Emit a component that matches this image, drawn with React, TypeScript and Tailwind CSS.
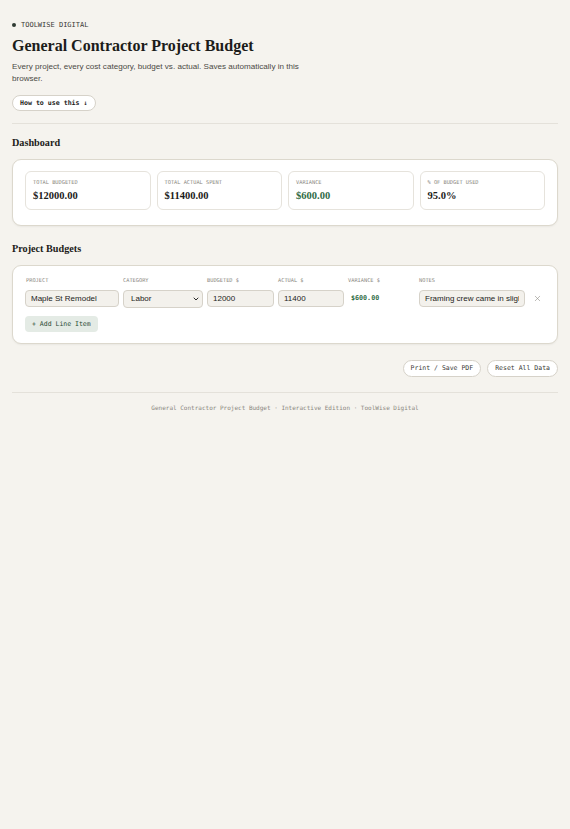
import { X, ChevronDown } from "lucide-react";

const mono = "font-['DejaVu_Sans_Mono',monospace]";
const serif = "font-['Liberation_Serif',serif]";
const sans = "font-['Liberation_Sans',sans-serif]";

const cols = "grid grid-cols-[94px_80px_67px_66px_67px_106px_1fr] gap-x-[4px]";

function Stat({ label, value, green }: { label: string; value: string; green?: boolean }) {
  return (
    <div className="rounded-md border border-[#e6e3dc] bg-white px-[7px] pt-[7px] pb-[6px]">
      <div className={`${mono} text-[5.3px] leading-[7px] uppercase text-[#8a8780]`}>{label}</div>
      <div className={`${serif} mt-[3px] text-[10.5px] font-bold leading-[14px] ${green ? "text-[#2f6b45]" : "text-[#1c1c1a]"}`}>
        {value}
      </div>
    </div>
  );
}

const inputCls = `${sans} block h-[17px] w-full rounded-[4px] border border-[#d6d2c9] bg-[#f3f1ec] px-[5px] text-[8px] leading-[15px] text-[#1c1c1a] outline-none`;

export default function App() {
  return (
    <div className="min-h-[829px] bg-[#f5f3ee] px-[12px] pt-[21px] pb-6 text-[#1c1c1a]">
      <div className={`${mono} flex h-[8px] items-center gap-[5px] text-[7px] leading-[8px] text-[#3a3a36]`}>
        <span className="h-[4px] w-[4px] rounded-full bg-[#2f3a32]" />
        TOOLWISE DIGITAL
      </div>
      <h1 className={`${serif} mt-[7px] text-[16px] font-bold leading-[20px]`}>General Contractor Project Budget</h1>
      <p className={`${sans} mt-[5px] max-w-[300px] text-[8.1px] leading-[12px] text-[#4b4a45]`}>
        Every project, every cost category, budget vs. actual. Saves automatically in this browser.
      </p>
      <button className={`${mono} mt-[10px] h-[16px] rounded-full border border-[#d6d2c9] bg-white px-[7px] text-[6.6px] font-bold leading-[14px] text-[#1c1c1a]`}>
        How to use this ↓
      </button>

      <div className="mt-[12px] h-px bg-[#e4e1da]" />

      <h2 className={`${serif} mt-[13px] text-[10.2px] font-bold leading-[12px]`}>Dashboard</h2>
      <div className="mt-[10px] rounded-[9px] border border-[#dcd8cd] bg-white px-[12px] pt-[11px] pb-[15px] shadow-[0_1px_2px_rgba(0,0,0,0.05)]">
        <div className="grid grid-cols-4 gap-[6px]">
          <Stat label="Total Budgeted" value="$12000.00" />
          <Stat label="Total Actual Spent" value="$11400.00" />
          <Stat label="Variance" value="$600.00" green />
          <Stat label="% of Budget Used" value="95.0%" />
        </div>
      </div>

      <h2 className={`${serif} mt-[17px] text-[10.2px] font-bold leading-[12px]`}>Project Budgets</h2>
      <div className="mt-[10px] rounded-[9px] border border-[#dcd8cd] bg-white px-[12px] pt-[11px] pb-[11px] shadow-[0_1px_2px_rgba(0,0,0,0.05)]">
        <div className={`${mono} ${cols} text-[5.3px] leading-[7px] uppercase text-[#8a8780]`}>
          <div className="pl-[1px]">Project</div>
          <div>Category</div>
          <div>Budgeted $</div>
          <div>Actual $</div>
          <div>Variance $</div>
          <div>Notes</div>
          <div />
        </div>
        <div className={`mt-[5.5px] ${cols} items-center`}>
          <input className={inputCls} defaultValue="Maple St Remodel" />
          <div className="relative">
            <select className={`${inputCls} h-[18px] appearance-none pl-[7px]`} defaultValue="Labor">
              <option>Labor</option>
              <option>Materials</option>
            </select>
            <ChevronDown
              className="pointer-events-none absolute right-[3px] top-[5px] h-[8px] w-[8px] text-[#2a2a28]"
              strokeWidth={3}
            />
          </div>
          <input className={inputCls} defaultValue="12000" />
          <input className={inputCls} defaultValue="11400" />
          <div className={`${mono} pl-[3px] text-[6.7px] font-bold text-[#2f6b45]`}>$600.00</div>
          <input className={inputCls} defaultValue="Framing crew came in slightly under budget" />
          <div className="flex justify-center">
            <X className="h-[9px] w-[9px] text-[#8a8780]" strokeWidth={1.5} />
          </div>
        </div>
        <button className={`${mono} mt-[8px] h-[16px] rounded-[4px] bg-[#e4ebe5] px-[7px] text-[6.5px] text-[#2a4a34]`}>
          + Add Line Item
        </button>
      </div>

      <div className="mt-[16px] flex justify-end gap-[6px]">
        <button className={`${mono} h-[17px] rounded-full border border-[#d6d2c9] bg-white px-[7px] text-[6.5px] text-[#3a3a36]`}>
          Print / Save PDF
        </button>
        <button className={`${mono} h-[17px] rounded-full border border-[#d6d2c9] bg-white px-[7px] text-[6.5px] text-[#3a3a36]`}>
          Reset All Data
        </button>
      </div>

      <div className="mt-[15px] h-px bg-[#e4e1da]" />
      <div className={`${mono} mt-[11px] text-center text-[6px] leading-[8px] text-[#8a8780]`}>
        General Contractor Project Budget · Interactive Edition · ToolWise Digital
      </div>
    </div>
  );
}
